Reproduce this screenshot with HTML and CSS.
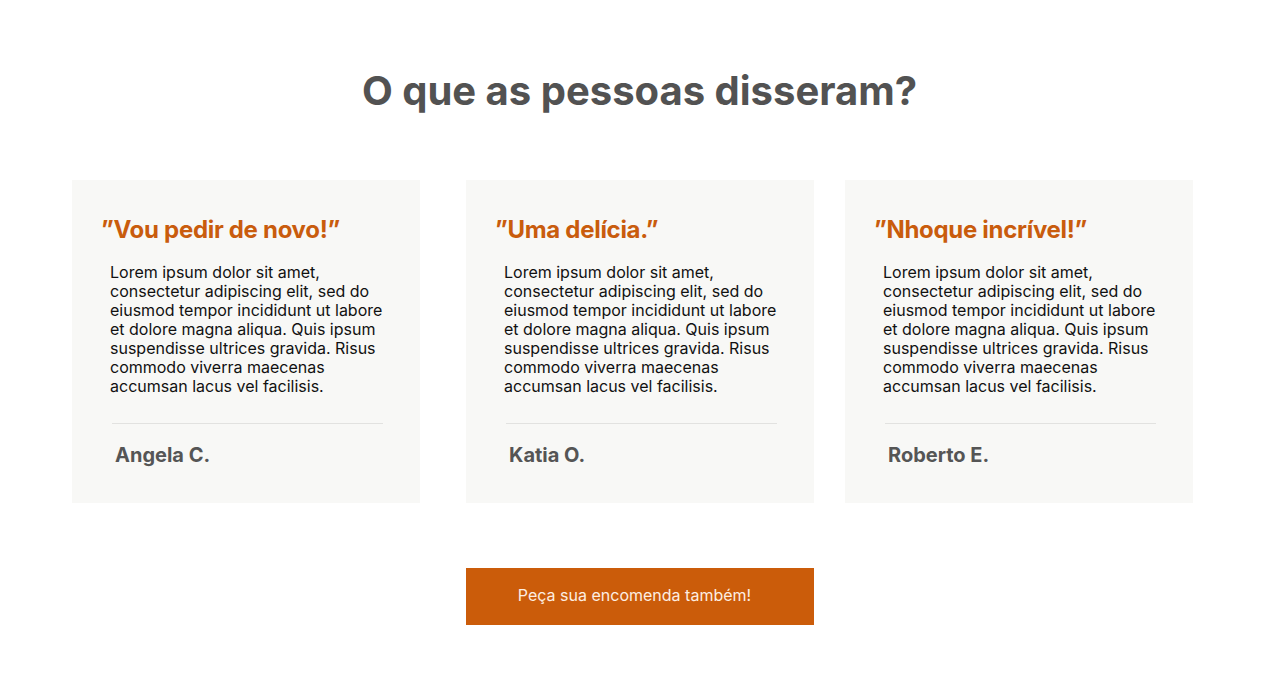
FILE: index.html
```html
<!DOCTYPE html>
<html lang="pt-BR">
<head>
<meta charset="utf-8">
<title>Depoimentos</title>
<link rel="stylesheet" href="styles.css">
</head>
<body>
<section class="testimonials">
  <h1 class="title">O que as pessoas disseram?</h1>
  <div class="cards">
    <article class="card">
      <h2 class="quote">”Vou pedir de novo!”</h2>
      <p class="text">Lorem ipsum dolor sit amet, consectetur adipiscing elit, sed do eiusmod tempor incididunt ut labore et dolore magna aliqua. Quis ipsum suspendisse ultrices gravida. Risus commodo viverra maecenas accumsan lacus vel facilisis.</p>
      <hr class="divider">
      <p class="name">Angela C.</p>
    </article>
    <article class="card">
      <h2 class="quote">”Uma delícia.”</h2>
      <p class="text">Lorem ipsum dolor sit amet, consectetur adipiscing elit, sed do eiusmod tempor incididunt ut labore et dolore magna aliqua. Quis ipsum suspendisse ultrices gravida. Risus commodo viverra maecenas accumsan lacus vel facilisis.</p>
      <hr class="divider">
      <p class="name">Katia O.</p>
    </article>
    <article class="card">
      <h2 class="quote">”Nhoque incrível!”</h2>
      <p class="text">Lorem ipsum dolor sit amet, consectetur adipiscing elit, sed do eiusmod tempor incididunt ut labore et dolore magna aliqua. Quis ipsum suspendisse ultrices gravida. Risus commodo viverra maecenas accumsan lacus vel facilisis.</p>
      <hr class="divider">
      <p class="name">Roberto E.</p>
    </article>
  </div>
  <div class="cta-row">
    <a class="cta" href="#">Peça sua encomenda também!</a>
  </div>
</section>
</body>
</html>
```

FILE: styles.css
```css
* { box-sizing: border-box; }
html, body { margin: 0; padding: 0; background: #ffffff; }
body { font-family: Inter, "Noto Sans", sans-serif; }

.testimonials {
  padding-top: 67px;
  padding-left: 72px;
}

.title {
  margin: 0;
  width: 1135px;
  text-align: center;
  font-size: 40px;
  line-height: 48px;
  font-weight: 700;
  color: #525252;
}

.cards {
  display: flex;
  margin-top: 65px;
}

.card {
  width: 348px;
  height: 323px;
  background: #f8f8f6;
  padding: 35px 0 0 29px;
}
.card:nth-child(2) { margin: 0 31px 0 46px; }

.quote {
  margin: 0;
  font-size: 24px;
  line-height: 29px;
  font-weight: 700;
  letter-spacing: -0.3px;
  color: #c95c0d;
}

.text {
  margin: 19px 0 0 9px;
  width: 282px;
  font-size: 16px;
  line-height: 19px;
  color: #111111;
}

.divider {
  margin: 27px 0 0 11px;
  width: 271px;
  border: 0;
  border-top: 1px solid #e2e2e0;
  height: 0;
}

.name {
  margin: 19px 0 0 14px;
  font-size: 20px;
  line-height: 24px;
  font-weight: 700;
  color: #555555;
}

.cta-row {
  margin-top: 65px;
  padding-left: 394px;
}

.cta {
  display: flex;
  align-items: center;
  justify-content: center;
  width: 348px;
  height: 57px;
  padding: 0 11px 3px 0;
  background: #cb5c0a;
  color: #fdeee2;
  font-size: 16px;
  text-decoration: none;
}
```
